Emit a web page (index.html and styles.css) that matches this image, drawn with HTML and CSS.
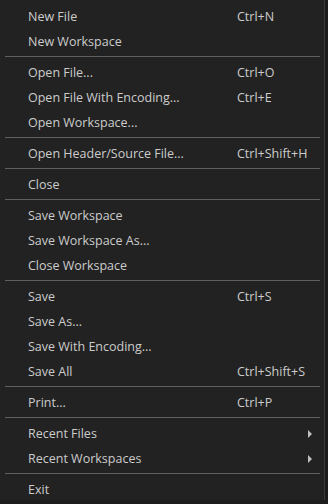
FILE: index.html
```html
<!DOCTYPE html>
<html lang="en">
  <head>
    <title>File Menu</title>
    <meta name="viewport" content="width=device-width, initial-scale=1">
    <link rel="stylesheet" href="styles.css">
  </head>
  <body>
    <ul class="menu">
      <li class="menu-item"><span class="label">New File</span><span class="key">Ctrl+N</span></li>
      <li class="menu-item"><span class="label">New Workspace</span></li>
      <li class="sep"></li>
      <li class="menu-item"><span class="label">Open File...</span><span class="key">Ctrl+O</span></li>
      <li class="menu-item"><span class="label">Open File With Encoding...</span><span class="key">Ctrl+E</span></li>
      <li class="menu-item"><span class="label">Open Workspace...</span></li>
      <li class="sep"></li>
      <li class="menu-item"><span class="label">Open Header/Source File...</span><span class="key">Ctrl+Shift+H</span></li>
      <li class="sep"></li>
      <li class="menu-item"><span class="label">Close</span></li>
      <li class="sep"></li>
      <li class="menu-item"><span class="label">Save Workspace</span></li>
      <li class="menu-item"><span class="label">Save Workspace As...</span></li>
      <li class="menu-item"><span class="label">Close Workspace</span></li>
      <li class="sep"></li>
      <li class="menu-item"><span class="label">Save</span><span class="key">Ctrl+S</span></li>
      <li class="menu-item"><span class="label">Save As...</span></li>
      <li class="menu-item"><span class="label">Save With Encoding...</span></li>
      <li class="menu-item"><span class="label">Save All</span><span class="key">Ctrl+Shift+S</span></li>
      <li class="sep"></li>
      <li class="menu-item"><span class="label">Print...</span><span class="key">Ctrl+P</span></li>
      <li class="sep"></li>
      <li class="menu-item"><span class="label">Recent Files</span><span class="arrow"></span></li>
      <li class="menu-item"><span class="label">Recent Workspaces</span><span class="arrow"></span></li>
      <li class="sep"></li>
      <li class="menu-item"><span class="label">Exit</span></li>
    </ul>
  </body>
</html>
```

FILE: styles.css
```css
html, body {
  margin: 0;
  background-color: #1c1c1c;
}
.menu {
  list-style: none;
  margin: 0;
  padding: 4px 0 0 0;
  width: 325px;
  height: 500px;
  box-sizing: border-box;
  background-color: #222222;
  border-right: 1px solid #3a3a3a;
  font-family: "Open Sans", "DejaVu Sans", sans-serif;
  font-size: 12.5px;
  color: #cccccc;
}
.menu-item {
  display: flex;
  align-items: center;
  height: 25px;
  padding-left: 28px;
}
.label {
  flex: 1;
  white-space: nowrap;
}
.key {
  width: 87px;
  white-space: nowrap;
}
.arrow {
  width: 0;
  height: 0;
  margin-right: 12px;
  border-top: 4px solid transparent;
  border-bottom: 4px solid transparent;
  border-left: 4px solid #c0c0c0;
}
.sep {
  height: 0;
  margin: 2px 4px 3px 5px;
  border-top: 1px solid #5f5f5f;
}
```
